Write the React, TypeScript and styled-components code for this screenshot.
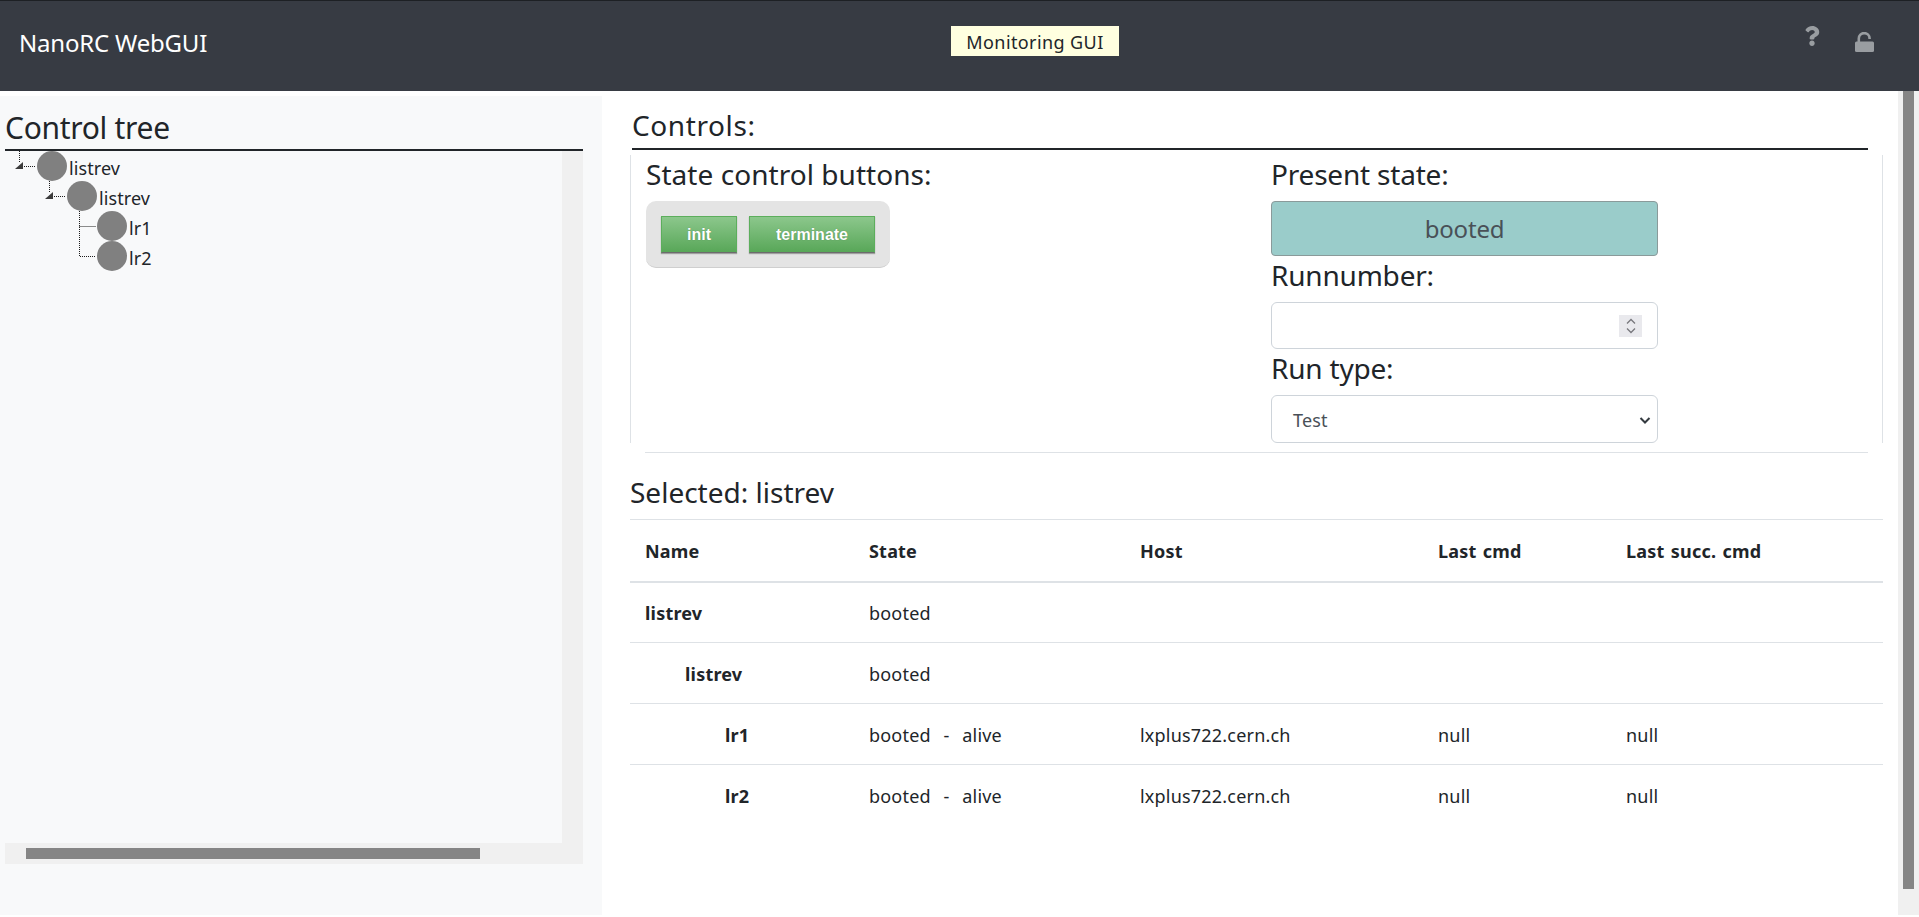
import styled, { createGlobalStyle } from "styled-components";
import { FaQuestion } from "react-icons/fa";

const GlobalStyle = createGlobalStyle`
  html, body {
    margin: 0;
    height: 100%;
    overflow: hidden;
    background: #fff;
  }
  body {
    font-family: "Noto Sans", "Open Sans", sans-serif;
    color: #212529;
  }
  * { box-sizing: border-box; }
`;

const Page = styled.div`
  display: flex;
  flex-direction: column;
  height: 917px;
`;

const Header = styled.header`
  display: flex;
  align-items: center;
  height: 91px;
  flex: none;
  padding: 0 45px 10px 19px;
  background: #373b43;
  border-top: 1px solid #1d2024;
`;

const Brand = styled.div`
  flex: 0 0 932px;
  margin-top: 2px;
  font-size: 24px;
  color: #fff;
  letter-spacing: -0.2px;
`;

const Badge = styled.div`
  width: 168px;
  height: 30px;
  padding-top: 2px;
  display: flex;
  align-items: center;
  justify-content: center;
  background: #ffffe0;
  color: #212529;
  font-size: 18px;
  letter-spacing: 0.4px;
`;

const HeaderIcons = styled.div`
  margin-left: auto;
  display: flex;
  align-items: flex-start;
  gap: 33px;
  color: #999da1;
`;

const Body = styled.div`
  display: flex;
  flex: 1;
  min-height: 0;
`;

const Sidebar = styled.aside`
  width: 602px;
  flex: none;
  margin: 5px 0 2px;
  padding: 15px 19px 0 5px;
  background: #f8f9fa;
  display: flex;
  flex-direction: column;
`;

const Title = styled.h3`
  margin: 0;
  font-size: 28px;
  font-weight: 400;
  line-height: 38px;
`;

const SidebarTitle = styled(Title)`
  height: 40px;
  border-bottom: 2px solid #212529;
  font-size: 30px;
  letter-spacing: -0.3px;
  line-height: 34px;
`;

const TreeFrame = styled.div`
  display: grid;
  grid-template-columns: 1fr 21px;
  grid-template-rows: 692px 21px;
`;

const Tree = styled.div`
  padding-left: 2px;
`;

const TreeRow = styled.div<{ $depth: number }>`
  display: flex;
  align-items: center;
  height: 30px;
  margin-left: ${(p) => p.$depth * 30}px;
`;

const TreeDot = styled.span`
  width: 30px;
  height: 30px;
  border-radius: 50%;
  background: #808080;
  flex: none;
`;

const TreeLabel = styled.span`
  margin: 3px 0 0 2px;
  font-size: 18px;
  letter-spacing: 0.1px;
  color: #212529;
`;

const ScrollTrack = styled.div`
  background: #f0f0f0;
`;

const HorizontalTrack = styled(ScrollTrack)`
  grid-column: 1 / 3;
  padding: 5px 0 5px 21px;
`;

const HorizontalThumb = styled.div`
  width: 454px;
  height: 11px;
  background: #858585;
`;

const Main = styled.main`
  flex: 1;
  min-width: 0;
  padding: 0 15px 0 28px;
`;

const ControlsTitle = styled(Title)`
  margin: 14px 0 0 2px;
  width: 1236px;
  height: 45px;
  line-height: 40px;
  letter-spacing: 0.6px;
  border-bottom: 2px solid #212529;
`;

const Controls = styled.section`
  display: grid;
  grid-template-columns: 625px 1fr;
  margin-top: 5px;
  height: 288px;
  padding-left: 15px;
  border-left: 1px solid #dee2e6;
  border-right: 1px solid #dee2e6;
`;

const ControlColumn = styled.div`
  display: flex;
  flex-direction: column;
  align-items: flex-start;
`;

const ControlLabel = styled.div`
  height: 46px;
  line-height: 38px;
  font-size: 28px;
  letter-spacing: -0.2px;
  width: 100%;
`;

const ButtonsLabel = styled(ControlLabel)`
  letter-spacing: 0.05px;
`;

const ButtonPanel = styled.div`
  display: flex;
  gap: 12px;
  width: 244px;
  height: 67px;
  padding: 15px;
  background: #e4e4e4;
  border-bottom: 1px solid #cfcfcf;
  border-radius: 10px;
`;

const StateButton = styled.button<{ $width: number }>`
  width: ${(p) => p.$width}px;
  height: 37px;
  padding: 0;
  font-family: "Liberation Sans", Arial, sans-serif;
  font-size: 16px;
  font-weight: 700;
  color: #fff;
  text-shadow: 0 0 1px rgba(0, 0, 0, 0.3);
  background: linear-gradient(#8cc78c, #58a758);
  border: 1px solid #5cae5c;
  border-bottom-color: #6c6c6c;
  border-radius: 0;
  box-shadow: 0 1px 1px rgba(0, 0, 0, 0.3);
`;

const StateBox = styled.div`
  width: 387px;
  height: 55px;
  display: flex;
  align-items: center;
  justify-content: center;
  font-size: 24px;
  letter-spacing: -0.2px;
  color: #495057;
  background: #9accca;
  border: 1px solid #8a9a9a;
  border-radius: 4px;
`;

const Field = styled.div`
  position: relative;
  width: 387px;
  display: flex;
  align-items: center;
  background: #fff;
  border: 1px solid #ced4da;
  border-radius: 6px;
`;

const NumberField = styled(Field)`
  height: 47px;
  justify-content: flex-end;
  padding-right: 15px;
`;

const SelectField = styled(Field)`
  height: 48px;
  justify-content: space-between;
  padding: 2px 6px 0 21px;
  font-size: 18px;
  letter-spacing: 0.2px;
  color: #495057;
`;

const Spinner = styled.span`
  width: 23px;
  height: 22px;
  background: #e9e9ed;
  display: flex;
  align-items: center;
  justify-content: center;
`;

const Divider = styled.hr`
  margin: 9px 15px 0 15px;
  border: 0;
  border-top: 1px solid #dee2e6;
`;

const SelectedTitle = styled(Title)`
  height: 66px;
  line-height: 78px;
`;

const Table = styled.table`
  width: 100%;
  table-layout: fixed;
  border-collapse: collapse;
  font-size: 18px;
  letter-spacing: 0.2px;
  word-spacing: 1.5px;
`;

const HeaderCell = styled.th<{ $width: number }>`
  width: ${(p) => p.$width}px;
  height: 62px;
  padding: 2px 15px 0;
  text-align: left;
  font-weight: 700;
  border-top: 1px solid #dee2e6;
  border-bottom: 2px solid #dee2e6;
`;

const Row = styled.tr`
  height: 61px;
  & + & td {
    border-top: 1px solid #dee2e6;
  }
`;

const Cell = styled.td`
  padding: 2px 15px 0;
`;

const NameCell = styled(Cell)<{ $depth: number }>`
  padding-left: ${(p) => 15 + p.$depth * 40}px;
  font-weight: 700;
`;

const PageTrack = styled(ScrollTrack)`
  width: 21px;
  flex: none;
  margin-bottom: 2px;
  padding: 0 5px;
`;

const PageThumb = styled.div`
  height: 798px;
  background: #858585;
`;

const nodes = [
  { name: "listrev", depth: 0, kind: "parent" },
  { name: "listrev", depth: 1, kind: "parent" },
  { name: "lr1", depth: 2, kind: "child" },
  { name: "lr2", depth: 2, kind: "last" },
];

const columns = [
  { label: "Name", width: 224 },
  { label: "State", width: 271 },
  { label: "Host", width: 298 },
  { label: "Last cmd", width: 188 },
  { label: "Last succ. cmd", width: 272 },
];

const rows = [
  { name: "listrev", depth: 0, state: "booted", host: "", cmd: "", succ: "" },
  { name: "listrev", depth: 1, state: "booted", host: "", cmd: "", succ: "" },
  { name: "lr1", depth: 2, state: "booted\u00a0\u00a0-\u00a0\u00a0alive", host: "lxplus722.cern.ch", cmd: "null", succ: "null" },
  { name: "lr2", depth: 2, state: "booted\u00a0\u00a0-\u00a0\u00a0alive", host: "lxplus722.cern.ch", cmd: "null", succ: "null" },
];

function TreeConnector({ kind }: { kind: string }) {
  const dots = { stroke: "#1c1c1c", strokeWidth: 1, strokeDasharray: "1 1", fill: "none" };
  return (
    <svg width="30" height="30" viewBox="0 0 30 30" style={{ flex: "none" }}>
      {kind === "parent" && (
        <>
          <path d="M12.5 0V12" {...dots} />
          <path d="M17 15.5H29" {...dots} />
          <path d="M8 18L16 11V18Z" fill="#3c3c3c" />
        </>
      )}
      {kind === "child" && <path d="M12.5 0V30M12.5 15.5H29" {...dots} />}
      {kind === "last" && <path d="M12.5 0V15.5H29" {...dots} />}
    </svg>
  );
}

function OpenLockIcon() {
  return (
    <svg width="19" height="20" viewBox="0 0 19 20" style={{ marginTop: 2 }}>
      <rect x="0" y="9.5" width="19" height="10.5" rx="1.5" fill="currentColor" />
      <path d="M3.8 10V6.5A5.4 5.4 0 0 1 14.6 6.5V7" fill="none" stroke="currentColor" strokeWidth="2.6" />
    </svg>
  );
}

export default function App() {
  return (
    <Page>
      <GlobalStyle />
      <Header>
        <Brand>NanoRC WebGUI</Brand>
        <Badge>Monitoring GUI</Badge>
        <HeaderIcons>
          <FaQuestion size={20} style={{ marginTop: -4 }} />
          <OpenLockIcon />
        </HeaderIcons>
      </Header>
      <Body>
        <Sidebar>
          <SidebarTitle>Control tree</SidebarTitle>
          <TreeFrame>
            <Tree>
              {nodes.map((node) => (
                <TreeRow key={node.name + node.depth} $depth={node.depth}>
                  <TreeConnector kind={node.kind} />
                  <TreeDot />
                  <TreeLabel>{node.name}</TreeLabel>
                </TreeRow>
              ))}
            </Tree>
            <ScrollTrack />
            <HorizontalTrack>
              <HorizontalThumb />
            </HorizontalTrack>
          </TreeFrame>
        </Sidebar>
        <Main>
          <ControlsTitle>Controls:</ControlsTitle>
          <Controls>
            <ControlColumn>
              <ButtonsLabel>State control buttons:</ButtonsLabel>
              <ButtonPanel>
                <StateButton $width={76}>init</StateButton>
                <StateButton $width={126}>terminate</StateButton>
              </ButtonPanel>
            </ControlColumn>
            <ControlColumn>
              <ControlLabel>Present state:</ControlLabel>
              <StateBox>booted</StateBox>
              <ControlLabel>Runnumber:</ControlLabel>
              <NumberField>
                <Spinner>
                  <svg width="12" height="18" viewBox="0 0 12 18" fill="none" stroke="#77777c" strokeWidth="1.3">
                    <path d="M2 6.5L6 2.5L10 6.5M2 11.5L6 15.5L10 11.5" />
                  </svg>
                </Spinner>
              </NumberField>
              <ControlLabel>Run type:</ControlLabel>
              <SelectField>
                Test
                <svg width="12" height="12" viewBox="0 0 12 12" fill="none" stroke="#343a40" strokeWidth="2">
                  <path d="M1.5 4L6 8.5L10.5 4" />
                </svg>
              </SelectField>
            </ControlColumn>
          </Controls>
          <Divider />
          <SelectedTitle>Selected: listrev</SelectedTitle>
          <Table>
            <thead>
              <tr>
                {columns.map((column) => (
                  <HeaderCell key={column.label} $width={column.width}>
                    {column.label}
                  </HeaderCell>
                ))}
              </tr>
            </thead>
            <tbody>
              {rows.map((row) => (
                <Row key={row.name + row.depth}>
                  <NameCell $depth={row.depth}>{row.name}</NameCell>
                  <Cell>{row.state}</Cell>
                  <Cell>{row.host}</Cell>
                  <Cell>{row.cmd}</Cell>
                  <Cell>{row.succ}</Cell>
                </Row>
              ))}
            </tbody>
          </Table>
        </Main>
        <PageTrack>
          <PageThumb />
        </PageTrack>
      </Body>
    </Page>
  );
}
